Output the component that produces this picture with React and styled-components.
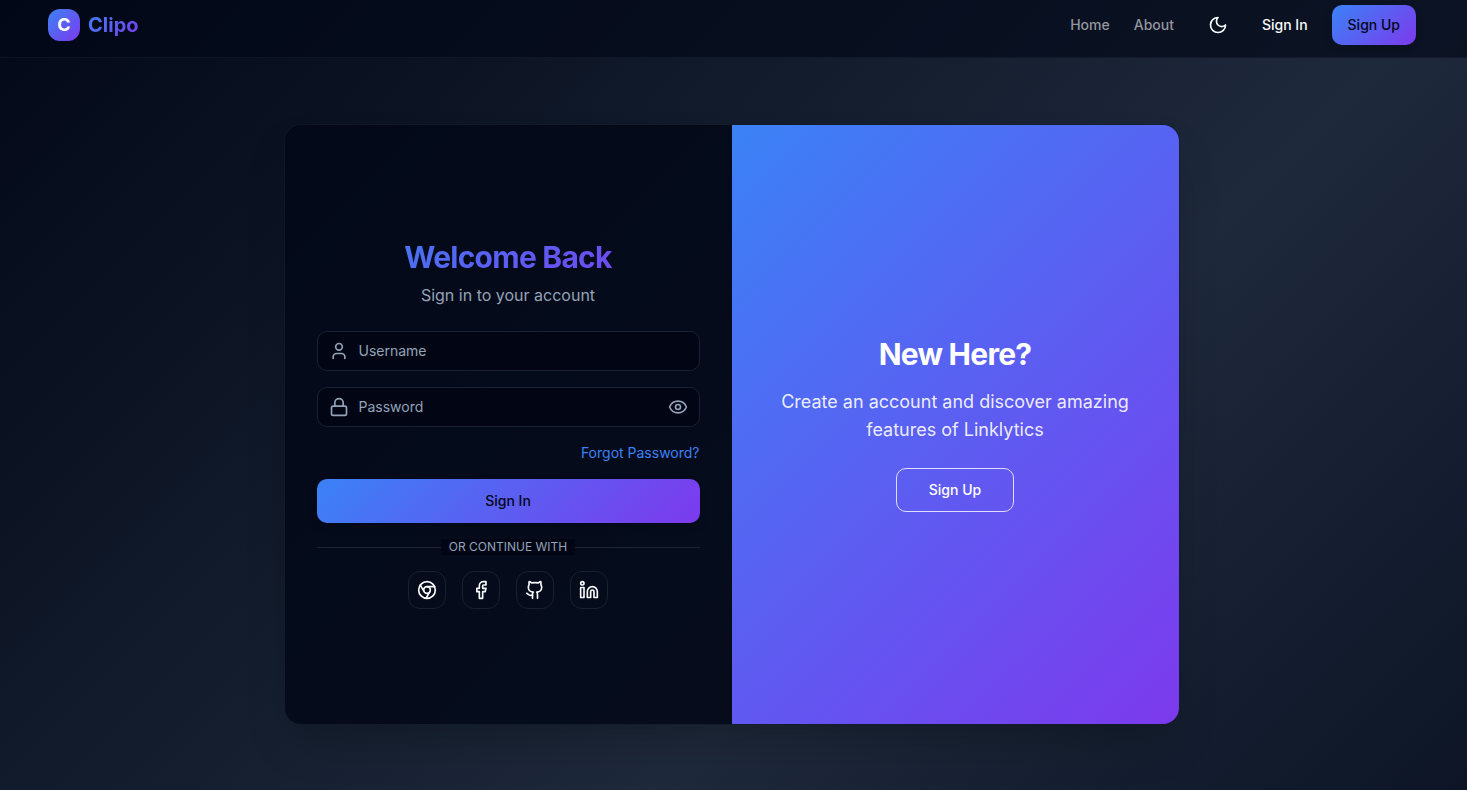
import React, { useState } from 'react';
import styled, { createGlobalStyle, css } from 'styled-components';
import { Chrome, Eye, Facebook, Github, Linkedin, Lock, User } from 'lucide-react';

const brand = 'linear-gradient(135deg, #3b82f6, #7c3aed)';

const GlobalStyle = createGlobalStyle`
  *, *::before, *::after { box-sizing: border-box; }
  body {
    margin: 0;
    font-family: Inter, "Liberation Sans", sans-serif;
    font-size: 14px;
    line-height: 20px;
    color: #f8fafc;
    background: #020617;
  }
  button, input { font: inherit; color: inherit; }
  button { cursor: pointer; }
  a { color: inherit; text-decoration: none; }
  h1, h2, p { margin: 0; }
`;

const Page = styled.div`
  min-height: 100vh;
  display: flex;
  flex-direction: column;
  background: linear-gradient(135deg, #020817 0%, #1e293b 64%, #0d1526 100%);
`;

const Header = styled.header`
  display: flex;
  align-items: center;
  justify-content: space-between;
  padding: 5px 51px 12px 48px;
  background: rgba(2, 8, 23, 0.64);
  border-bottom: 1px solid rgba(30, 41, 59, 0.4);
`;

const Brand = styled.a`
  display: flex;
  align-items: center;
  gap: 8px;
`;

const Logo = styled.span`
  display: grid;
  place-items: center;
  width: 32px;
  height: 32px;
  border-radius: 12px;
  background: ${brand};
  color: #fff;
  font-size: 18px;
  font-weight: 700;
`;

const gradientText = css`
  background: ${brand};
  background-clip: text;
  -webkit-background-clip: text;
  color: transparent;
`;

const BrandName = styled.span`
  ${gradientText}
  font-size: 20px;
  line-height: 28px;
  font-weight: 700;
`;

const Nav = styled.nav`
  display: flex;
  align-items: center;
  gap: 24px;
  font-weight: 500;
`;

const NavLink = styled.a`
  color: ${(p) => (p.$strong ? '#f8fafc' : '#94979e')};
`;

const IconButton = styled.button`
  display: grid;
  place-items: center;
  width: ${(p) => p.$size}px;
  height: ${(p) => p.$size}px;
  padding: 0;
  border: ${(p) => (p.$outlined ? '1px solid #182131' : '0')};
  border-radius: 12px;
  background: transparent;
`;

const Button = styled.button`
  height: ${(p) => (p.$large ? 44 : 40)}px;
  padding: 0 ${(p) => (p.$large ? 32 : 16)}px;
  border-radius: 10px;
  font-weight: 500;
  ${(p) =>
    p.$outlined
      ? css`
          border: 1px solid rgba(255, 255, 255, 0.8);
          background: transparent;
          color: #fff;
        `
      : css`
          border: 0;
          background: ${brand};
          color: #020617;
          box-shadow: 0 4px 8px rgba(0, 0, 0, 0.15);
        `}
`;

const Main = styled.main`
  flex: 1;
  display: flex;
  align-items: flex-start;
  justify-content: center;
  padding: 67px 20px 64px 16px;
`;

const Card = styled.section`
  display: grid;
  grid-template-columns: 1fr 1fr;
  width: 100%;
  max-width: 894px;
  min-height: 599px;
  border-radius: 16px;
  overflow: hidden;
  background: rgba(2, 8, 23, 0.86);
  box-shadow: 0 0 0 1px rgba(20, 29, 45, 0.6), 0 24px 48px -12px rgba(0, 0, 0, 0.25);
`;

const FormPanel = styled.form`
  display: flex;
  flex-direction: column;
  justify-content: center;
  gap: 16px;
  padding: 32px 32px 33px;
`;

const Heading = styled.div`
  display: flex;
  flex-direction: column;
  gap: 8px;
  margin-bottom: 8px;
  text-align: center;
`;

const Title = styled.h1`
  ${gradientText}
  font-size: 30px;
  line-height: 36px;
  font-weight: 700;
  letter-spacing: -0.025em;
`;

const Subtitle = styled.p`
  color: #94a3b8;
  font-size: 16px;
  line-height: 24px;
`;

const Field = styled.label`
  display: flex;
  align-items: center;
  gap: 10px;
  height: 40px;
  padding: 0 11px;
  border: 1px solid #182131;
  border-radius: 10px;
  background: #020614;
  color: #94a3b8;
`;

const Input = styled.input`
  flex: 1;
  min-width: 0;
  padding: 0;
  border: 0;
  outline: 0;
  background: transparent;
  &::placeholder { color: #94a3b8; opacity: 1; }
`;

const ForgotLink = styled.a`
  align-self: flex-end;
  color: #3b82f6;
`;

const Divider = styled.div`
  display: flex;
  align-items: center;
  color: #94a3b8;
  font-size: 12px;
  line-height: 16px;
  &::before, &::after {
    content: '';
    flex: 1;
    height: 1px;
    background: #1a2433;
  }
`;

const DividerText = styled.span`
  padding: 0 8px;
  background: #020614;
`;

const SocialRow = styled.div`
  display: flex;
  justify-content: center;
  gap: 16px;
`;

const PromoPanel = styled.div`
  display: flex;
  flex-direction: column;
  align-items: center;
  justify-content: center;
  padding: 32px 32px 33px;
  background: ${brand};
  text-align: center;
`;

const PromoTitle = styled.h2`
  margin-bottom: 16px;
  color: #fff;
  font-size: 30px;
  line-height: 36px;
  font-weight: 700;
  letter-spacing: -0.025em;
`;

const PromoText = styled.p`
  margin-bottom: 24px;
  color: rgba(255, 255, 255, 0.9);
  font-size: 18px;
  line-height: 28px;
`;

const MoonIcon = () => (
  <svg width="20" height="20" viewBox="0 0 24 24" fill="none" stroke="currentColor" strokeWidth="2" strokeLinecap="round" strokeLinejoin="round" aria-hidden="true">
    <path d="M12 3a6 6 0 0 0 9 9 9 9 0 1 1-9-9Z" />
  </svg>
);

const socials = [
  { name: 'Google', Icon: Chrome },
  { name: 'Facebook', Icon: Facebook },
  { name: 'GitHub', Icon: Github },
  { name: 'LinkedIn', Icon: Linkedin },
];

export default function App() {
  const [visible, setVisible] = useState(false);

  return (
    <>
      <GlobalStyle />
      <Page>
        <Header>
          <Brand href="#home">
            <Logo>C</Logo>
            <BrandName>Clipo</BrandName>
          </Brand>
          <Nav>
            <NavLink href="#home">Home</NavLink>
            <NavLink href="#about">About</NavLink>
            <IconButton type="button" $size={40} aria-label="Toggle theme">
              <MoonIcon />
            </IconButton>
            <NavLink href="#signin" $strong>Sign In</NavLink>
            <Button type="button">Sign Up</Button>
          </Nav>
        </Header>
        <Main>
          <Card>
            <FormPanel onSubmit={(e) => e.preventDefault()}>
              <Heading>
                <Title>Welcome Back</Title>
                <Subtitle>Sign in to your account</Subtitle>
              </Heading>
              <Field>
                <User size={20} />
                <Input type="text" placeholder="Username" aria-label="Username" />
              </Field>
              <Field>
                <Lock size={20} />
                <Input type={visible ? 'text' : 'password'} placeholder="Password" aria-label="Password" />
                <IconButton type="button" $size={20} aria-label="Show password" onClick={() => setVisible(!visible)}>
                  <Eye size={20} />
                </IconButton>
              </Field>
              <ForgotLink href="#forgot">Forgot Password?</ForgotLink>
              <Button type="submit" $large>Sign In</Button>
              <Divider>
                <DividerText>OR CONTINUE WITH</DividerText>
              </Divider>
              <SocialRow>
                {socials.map(({ name, Icon }) => (
                  <IconButton key={name} type="button" $size={38} $outlined aria-label={name}>
                    <Icon size={20} />
                  </IconButton>
                ))}
              </SocialRow>
            </FormPanel>
            <PromoPanel>
              <PromoTitle>New Here?</PromoTitle>
              <PromoText>Create an account and discover amazing features of Linklytics</PromoText>
              <Button type="button" $large $outlined>Sign Up</Button>
            </PromoPanel>
          </Card>
        </Main>
      </Page>
    </>
  );
}
